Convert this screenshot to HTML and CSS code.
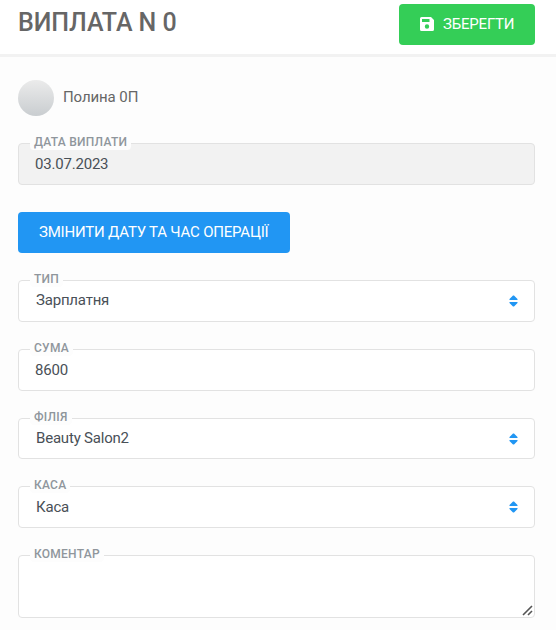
FILE: index.html
```html
<!doctype html>
<html lang="uk">
  <head>
    <meta charset="utf-8">
    <meta name="viewport" content="width=device-width, initial-scale=1">
    <title>Виплата N 0</title>
    <link rel="stylesheet" href="styles.css">
  </head>
  <body>
    <header class="page-header">
      <h1 class="page-title">ВИПЛАТА N 0</h1>
      <button type="submit" form="payment" class="btn btn-success">
        <svg class="btn-icon" viewBox="0 0 14 14" aria-hidden="true">
          <path fill="currentColor" fill-rule="evenodd" d="M1.6 0H11L14 3V12.4A1.6 1.6 0 0 1 12.4 14H1.6A1.6 1.6 0 0 1 0 12.4V1.6A1.6 1.6 0 0 1 1.6 0ZM2 2V5H9.5V2ZM7 7.3A2.2 2.2 0 1 0 7 11.7A2.2 2.2 0 1 0 7 7.3Z"/>
        </svg>
        <span>ЗБЕРЕГТИ</span>
      </button>
    </header>

    <main class="content">
      <div class="user">
        <span class="avatar"></span>
        <span class="user-name">Полина 0П</span>
      </div>

      <form id="payment" class="form">
        <div class="field">
          <label class="field-label" for="date">ДАТА ВИПЛАТИ</label>
          <input class="control" id="date" type="text" value="03.07.2023" readonly>
        </div>

        <button type="button" class="btn btn-primary">ЗМІНИТИ ДАТУ ТА ЧАС ОПЕРАЦІЇ</button>

        <div class="field">
          <label class="field-label" for="type">ТИП</label>
          <select class="control control-type" id="type"><option>Зарплатня</option></select>
          <svg class="arrows" viewBox="0 0 9 12" aria-hidden="true"><path d="M0.5 5V4L4 0.5H5L8.5 4V5ZM0.5 7H8.5V8L5 11.5H4L0.5 8Z"/></svg>
        </div>

        <div class="field">
          <label class="field-label" for="sum">СУМА</label>
          <input class="control" id="sum" type="text" value="8600">
        </div>

        <div class="field">
          <label class="field-label" for="branch">ФІЛІЯ</label>
          <select class="control" id="branch"><option>Beauty Salon2</option></select>
          <svg class="arrows" viewBox="0 0 9 12" aria-hidden="true"><path d="M0.5 5V4L4 0.5H5L8.5 4V5ZM0.5 7H8.5V8L5 11.5H4L0.5 8Z"/></svg>
        </div>

        <div class="field">
          <label class="field-label" for="cash">КАСА</label>
          <select class="control" id="cash"><option>Каса</option></select>
          <svg class="arrows" viewBox="0 0 9 12" aria-hidden="true"><path d="M0.5 5V4L4 0.5H5L8.5 4V5ZM0.5 7H8.5V8L5 11.5H4L0.5 8Z"/></svg>
        </div>

        <div class="field">
          <label class="field-label" for="comment">КОМЕНТАР</label>
          <textarea class="control control-area" id="comment"></textarea>
          <svg class="grip" viewBox="0 0 11 11" aria-hidden="true"><path d="M1 10L10 1M6 10L10 6"/></svg>
        </div>
      </form>
    </main>
  </body>
</html>
```

FILE: styles.css
```css
* {
  box-sizing: border-box;
}

body {
  margin: 0;
  background: #fdfdfd;
  color: #666;
  font-family: Roboto, "Liberation Sans", sans-serif;
  font-size: 15px;
  overflow: hidden;
}

.page-header {
  display: flex;
  align-items: flex-start;
  justify-content: space-between;
  height: 57px;
  padding: 4px 21px 0 18px;
  background: #fff;
  border-bottom: 3px solid #f2f2f2;
}

.page-title {
  margin: 0;
  font-size: 25px;
  font-weight: 500;
  line-height: 37px;
  letter-spacing: -0.05px;
}

.btn {
  display: flex;
  align-items: center;
  height: 41px;
  padding: 0 21px;
  border: 0;
  border-radius: 4px;
  color: #fff;
  font: 400 15px/41px Roboto, "Liberation Sans", sans-serif;
  letter-spacing: -0.2px;
  white-space: nowrap;
}

.btn-success {
  width: 136px;
  gap: 9px;
  background: #34ce57;
}

.btn-primary {
  justify-self: start;
  width: 272px;
  height: 41.6px;
  background: #2196f3;
}

.btn-icon {
  flex: none;
  width: 14px;
  height: 14px;
  margin-top: -2px;
}

.content {
  padding: 23px 21px 0 18px;
}

.user {
  display: flex;
  align-items: center;
  gap: 9px;
  height: 36px;
}

.avatar {
  width: 36px;
  height: 36px;
  border-radius: 50%;
  background: linear-gradient(#ebebeb, #c9cdd0);
}

.user-name {
  line-height: 20px;
  margin-bottom: 2px;
  letter-spacing: -0.1px;
}

.form {
  display: grid;
  gap: 27.1px;
  margin-top: 27px;
}

.field {
  position: relative;
  display: flex;
}

/* label sits on the top border of its control */
.field-label {
  position: absolute;
  top: -9px;
  left: 12px;
  height: 16px;
  padding: 0 4px;
  border-radius: 4px;
  background: #fdfdfd;
  color: #8f969c;
  font-size: 12px;
  font-weight: 500;
  line-height: 16px;
  letter-spacing: 0.25px;
}

.control {
  width: 100%;
  height: 41.6px;
  margin: 0;
  padding: 0 16px;
  border: 1px solid #e2e2e2;
  border-radius: 4px;
  background: #fff;
  color: #495057;
  font: 400 15px/20px Roboto, "Liberation Sans", sans-serif;
  letter-spacing: -0.2px;
  outline: 0;
  appearance: none;
}

select.control {
  padding: 0 17px 1px;
}

select.control-type {
  padding-bottom: 2px;
}

.control[readonly] {
  background: #f2f2f2;
}

.control-area {
  height: 63px;
  padding: 10px 16px;
  resize: none;
}

.arrows {
  position: absolute;
  top: 15px;
  right: 17px;
  width: 9px;
  height: 12px;
  fill: #2196f3;
}

.grip {
  position: absolute;
  right: 2px;
  bottom: 2px;
  width: 11px;
  height: 11px;
  fill: none;
  stroke: #555;
  stroke-width: 1.6;
}
```
